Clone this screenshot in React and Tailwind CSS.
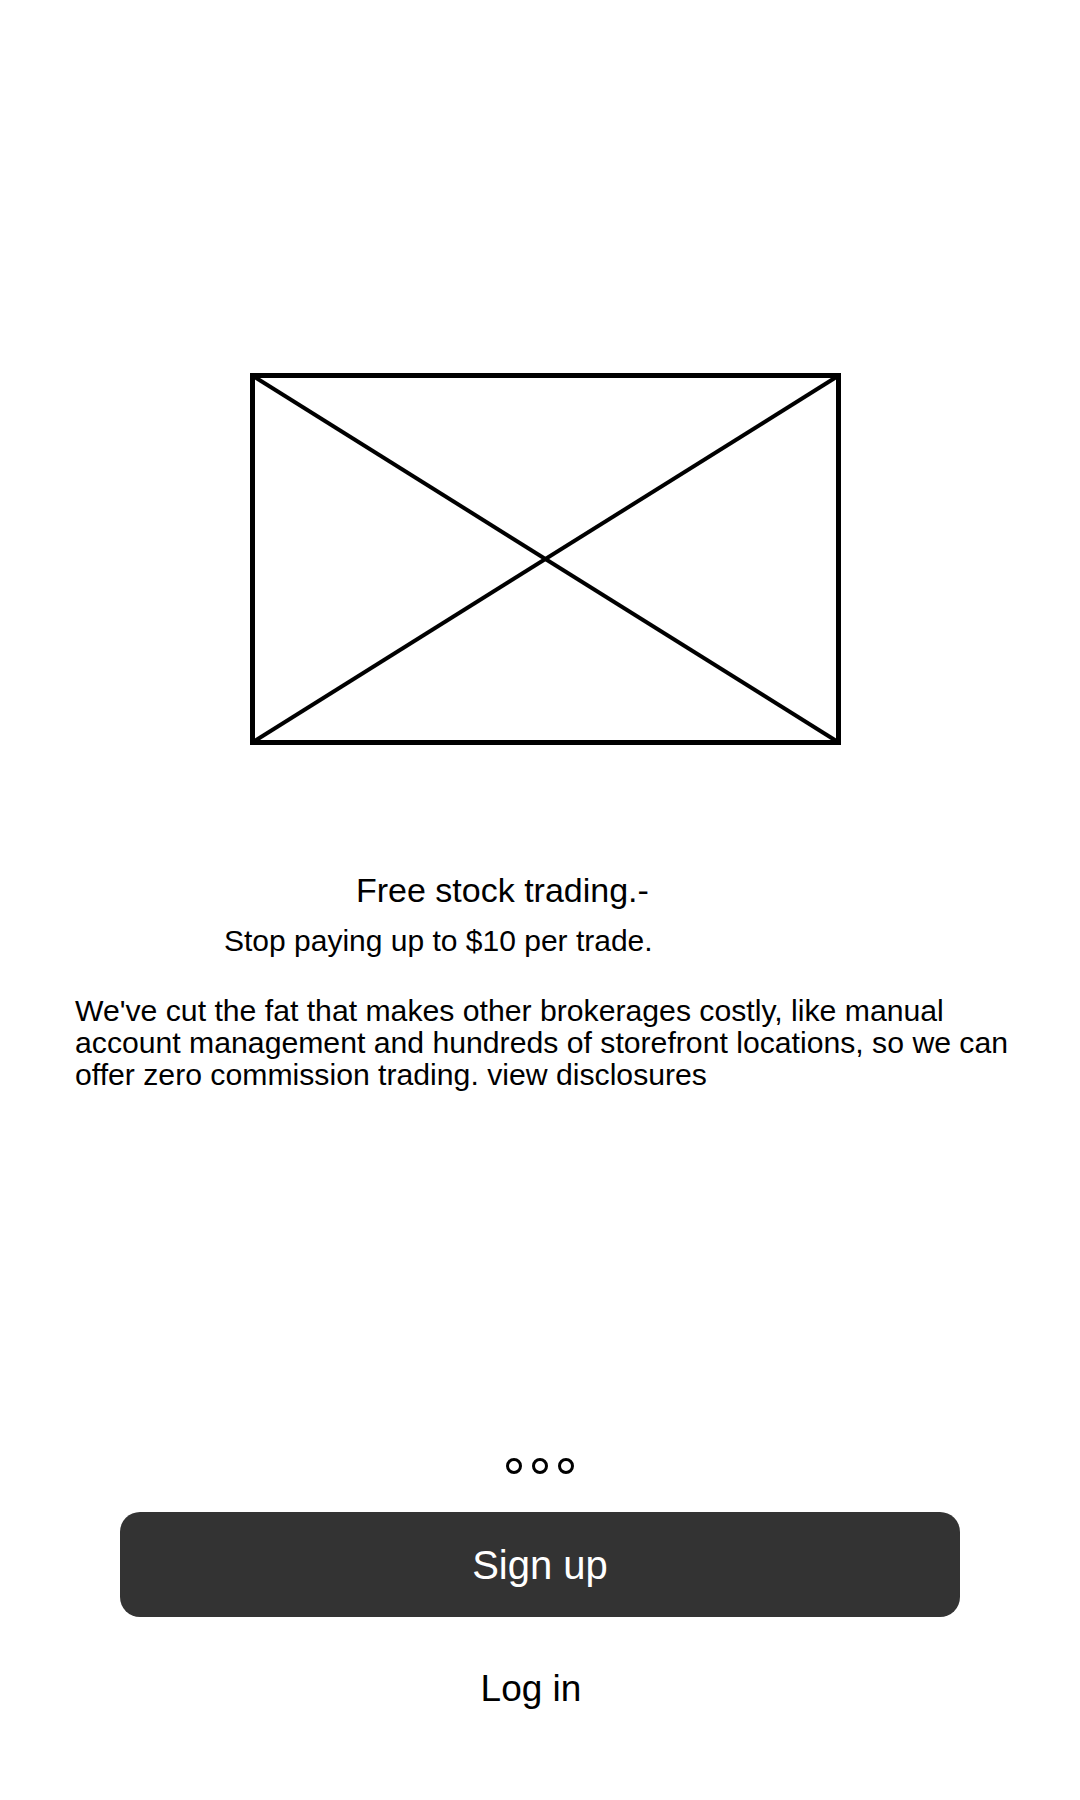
import React from 'react';

const Placeholder = () => (
    <svg width="591" height="372" viewBox="0 0 591 372" className="block">
        <rect x="2.5" y="2.5" width="586" height="367" fill="none" stroke="#000" strokeWidth="5" />
        <line x1="3" y1="3" x2="588" y2="369" stroke="#000" strokeWidth="4" />
        <line x1="588" y1="3" x2="3" y2="369" stroke="#000" strokeWidth="4" />
    </svg>
);

const Dots = () => (
    <div className="flex justify-center gap-[10px]">
        {[0, 1, 2].map((i) => (
            <span key={i} className="block w-[16px] h-[16px] rounded-full border-[3px] border-black" />
        ))}
    </div>
);

export default function App() {
    return (
        <div
            className="w-[1080px] min-h-[1800px] bg-white text-black flex flex-col pt-[373px]"
            style={{ fontFamily: '"Liberation Sans", Arial, sans-serif' }}
        >
            <div className="ml-[250px]">
                <Placeholder />
            </div>

            <h1 className="mt-[129px] pl-[356px] text-[34px] leading-[33px] font-normal">
                Free stock trading.-
            </h1>
            <p className="mt-[18px] pl-[224px] text-[30px] leading-[32px]">
                Stop paying up to $10 per trade.
            </p>

            <p className="mt-[38px] ml-[75px] w-[960px] text-[30.2px] leading-[32px]">
                We've cut the fat that makes other brokerages costly, like manual account management and hundreds of storefront locations, so we can offer zero commission trading. view disclosures
            </p>

            <div className="mt-[367px]">
                <Dots />
            </div>

            <button className="mt-[38px] ml-[120px] w-[840px] h-[105px] rounded-[20px] bg-[#333333] text-white text-[40px] flex items-center justify-center">
                Sign up
            </button>

            <button className="mt-[52px] pr-[18px] text-[37px] leading-[40px] flex justify-center">
                Log in
            </button>
        </div>
    );
}
